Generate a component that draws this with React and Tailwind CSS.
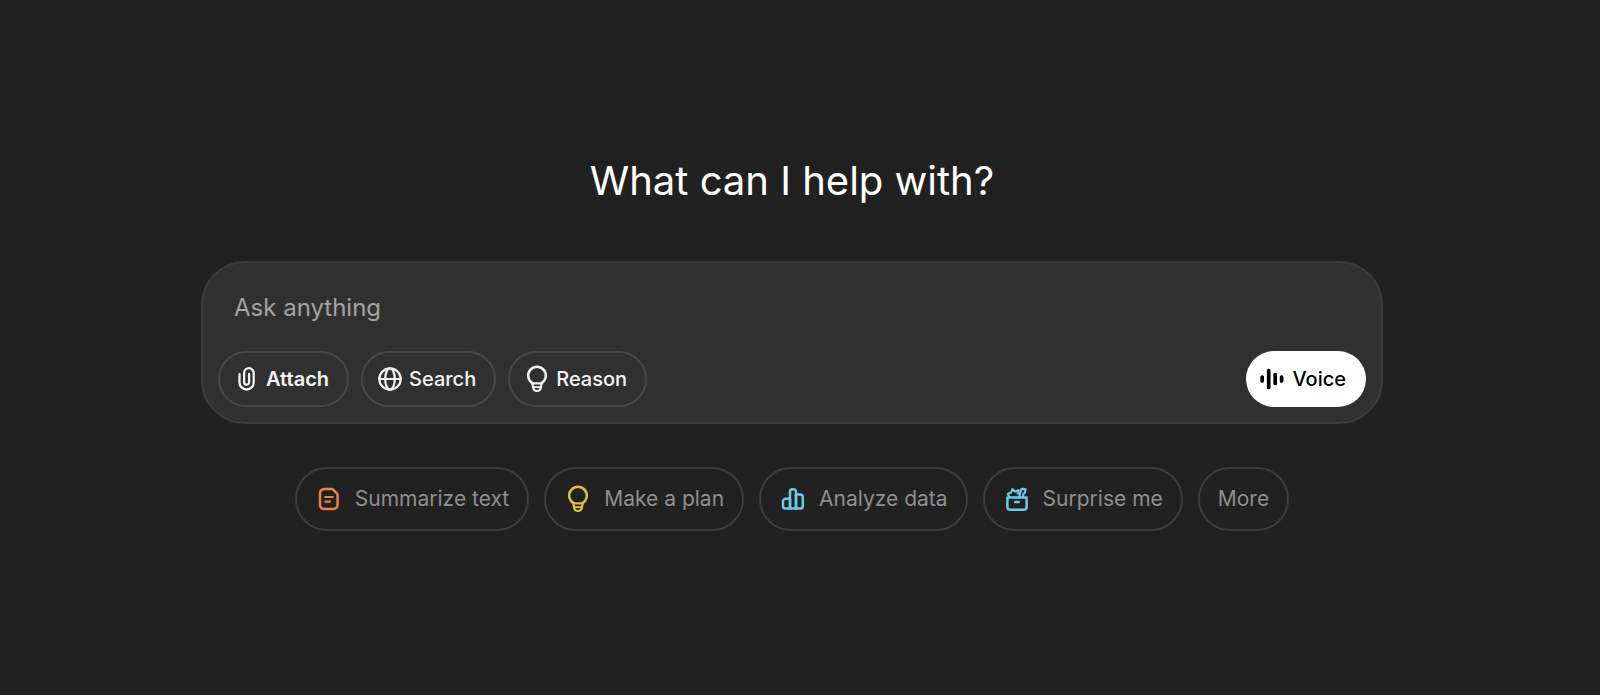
const stroke = {
  fill: 'none',
  stroke: 'currentColor',
  strokeWidth: 2.5,
  strokeLinecap: 'round',
  strokeLinejoin: 'round',
  'aria-hidden': true,
  className: 'shrink-0',
};

function ClipIcon() {
  return (
    <svg width="18" height="26" viewBox="0 0 18 26" {...stroke} strokeWidth="2.3">
      <path d="M1.5 8.2v8.2a7.1 7.1 0 0 0 14.2 0V7a4.8 4.8 0 0 0-9.6 0v9.2a2.5 2.5 0 0 0 5 0V7.8" />
    </svg>
  );
}

function GlobeIcon() {
  return (
    <svg width="24" height="24" viewBox="0 0 24 24" {...stroke} strokeWidth="2.2">
      <circle cx="12" cy="12" r="10.7" />
      <ellipse cx="12" cy="12" rx="4.8" ry="10.7" />
      <path d="M1.3 12h21.4" />
    </svg>
  );
}

function BulbIcon() {
  return (
    <svg width="22" height="28" viewBox="0 0 22 28" {...stroke}>
      <path d="M6.6 18.2A8.8 8.8 0 1 1 15.4 18.2" />
      <path d="M6.3 18.4h9.4l-.8 4.2c-.5 2.4-1.8 3.4-3.9 3.4s-3.4-1-3.9-3.4z" strokeWidth="2.2" />
      <path d="M7.2 22.2h7.6" strokeWidth="1.8" />
    </svg>
  );
}

function VoiceIcon() {
  return (
    <svg width="24" height="24" viewBox="0 0 24 24" {...stroke} strokeWidth="3.7">
      <path d="M2.2 10v4M8.7 3.6v16.8M15.2 7.6v8.8M21.6 10v4" />
    </svg>
  );
}

function DocumentIcon() {
  return (
    <svg width="22" height="24" viewBox="0 0 22 24" {...stroke}>
      <path d="M6.2 1.9h8.2l5.2 5.2v10.7a4.2 4.2 0 0 1-4.2 4.2H6.2A4.2 4.2 0 0 1 2 17.8V6.1a4.2 4.2 0 0 1 4.2-4.2z" />
      <path d="M7.2 10h7.6M7.2 14.6h4.8" strokeWidth="2.1" />
    </svg>
  );
}

function ChartIcon() {
  return (
    <svg width="24" height="24" viewBox="0 0 24 24" {...stroke}>
      <path d="M9 21.6H4.6A2.6 2.6 0 0 1 2 19v-4.6a2.6 2.6 0 0 1 2.6-2.6H9z" />
      <path d="M9 21.6V4.6a2.4 2.4 0 0 1 2.4-2.4h1.2A2.4 2.4 0 0 1 15 4.6v17z" />
      <path d="M15 7.4h4.2A2.6 2.6 0 0 1 21.8 10v9a2.6 2.6 0 0 1-2.6 2.6H15z" />
    </svg>
  );
}

function GiftIcon() {
  return (
    <svg width="24" height="26" viewBox="0 0 24 26" {...stroke}>
      <path d="M2.4 11.6h19.2v9.3a2.8 2.8 0 0 1-2.8 2.8H5.2a2.8 2.8 0 0 1-2.8-2.8z" />
      <path d="M10.2 16h3.6" />
      <path d="M4.4 11 2.8 7.8l3.4-1.4 1.2-3.2 2.8 2.4 3.2-1.4-.6 3.4" strokeWidth="2.2" />
      <path d="M14.4 11.2 15.6 5c.3-1.7 1-2.4 2.4-2.2l2.6.5-.7 3.3-1.4 1-.5 3.6" strokeWidth="2.2" />
    </svg>
  );
}

const tools = [
  { label: 'Attach', Icon: ClipIcon, weight: 'font-semibold' },
  { label: 'Search', Icon: GlobeIcon, weight: 'font-medium' },
  { label: 'Reason', Icon: BulbIcon, weight: 'font-medium' },
];

const suggestions = [
  { label: 'Summarize text', Icon: DocumentIcon, color: 'text-[#e8834a]' },
  { label: 'Make a plan', Icon: BulbIcon, color: 'text-[#dfc13c]' },
  { label: 'Analyze data', Icon: ChartIcon, color: 'text-[#6cc9e8]' },
  { label: 'Surprise me', Icon: GiftIcon, color: 'text-[#6cc9e8]' },
  { label: 'More' },
];

export default function App() {
  return (
    <main className="flex min-h-screen flex-col items-center bg-[#212121] pt-[153px] pr-4 font-['Inter','Liberation_Sans',sans-serif]">
      <h1 className="text-[40px] leading-[56px] text-white">What can I help with?</h1>

      <form
        className="mt-[52px] flex w-full max-w-[1182px] flex-col rounded-[44px] border-2 border-[#3c3c3c] bg-[#303030] px-[15px] pt-[26px] pb-[15px]"
        onSubmit={(event) => event.preventDefault()}
      >
        <input
          type="text"
          aria-label="Ask anything"
          placeholder="Ask anything"
          className="h-9 w-full bg-transparent px-4 text-2xl text-[#ececec] outline-none placeholder:text-[#a3a3a3]"
        />
        <div className="mt-[26px] flex items-center gap-3">
          {tools.map(({ label, Icon, weight }) => (
            <button
              key={label}
              type="button"
              className={`flex h-14 items-center gap-2 rounded-full border-2 border-[#484848] pr-[18px] pl-4 text-xl text-[#f2f2f2] ${weight}`}
            >
              <span className="flex w-[22px] justify-center">
                <Icon />
              </span>
              {label}
            </button>
          ))}
          <button
            type="button"
            className="ml-auto flex h-14 items-center gap-2 rounded-full bg-white pr-5 pl-[14px] text-xl font-medium text-black"
          >
            <VoiceIcon />
            Voice
          </button>
        </div>
      </form>

      <div className="mt-[43px] flex flex-wrap justify-center gap-[15px]">
        {suggestions.map(({ label, Icon, color }) => (
          <button
            key={label}
            type="button"
            className="flex h-16 items-center gap-[14px] rounded-full border-2 border-[#3d3d3d] px-[18px] text-[21px] text-[#8f8f8f]"
          >
            {Icon && (
              <span className={`ml-0.5 flex w-6 justify-center ${color}`}>
                <Icon />
              </span>
            )}
            {label}
          </button>
        ))}
      </div>
    </main>
  );
}
